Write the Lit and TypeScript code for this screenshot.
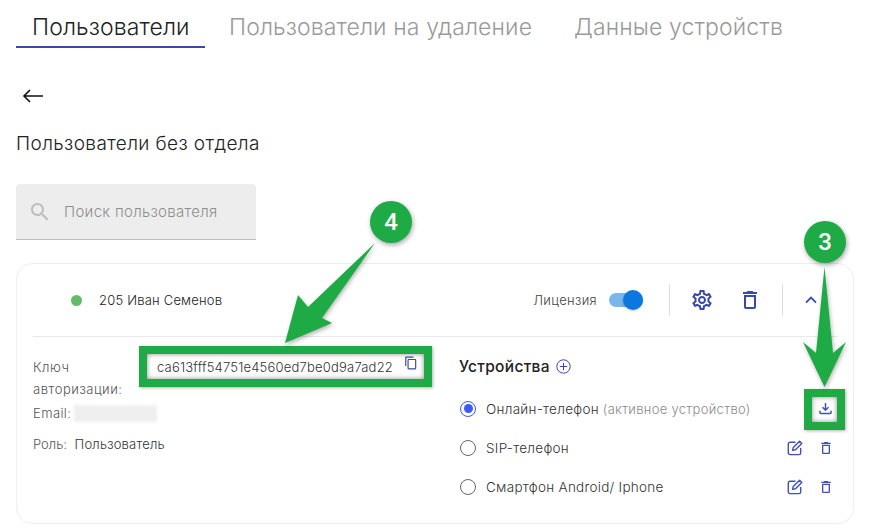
import { LitElement, html, css, svg } from "lit";
import { customElement } from "lit/decorators.js";

const gear = "M19.43 12.98c.04-.32.07-.64.07-.98 0-.34-.03-.66-.07-.98l2.11-1.65c.19-.15.24-.42.12-.64l-2-3.46c-.09-.16-.26-.25-.44-.25-.06 0-.12.01-.17.03l-2.49 1c-.52-.4-1.08-.73-1.69-.98l-.38-2.65C14.46 2.18 14.25 2 14 2h-4c-.25 0-.46.18-.49.42l-.38 2.65c-.61.25-1.17.59-1.69.98l-2.49-1c-.06-.02-.12-.03-.18-.03-.17 0-.34.09-.43.25l-2 3.46c-.13.22-.07.49.12.64l2.11 1.65c-.04.32-.07.65-.07.98 0 .33.03.66.07.98l-2.11 1.65c-.19.15-.24.42-.12.64l2 3.46c.09.16.26.25.44.25.06 0 .12-.01.17-.03l2.49-1c.52.4 1.08.73 1.69.98l.38 2.65c.03.24.24.42.49.42h4c.25 0 .46-.18.49-.42l.38-2.65c.61-.25 1.17-.59 1.69-.98l2.49 1c.06.02.12.03.18.03.17 0 .34-.09.43-.25l2-3.46c.12-.22.07-.49-.12-.64l-2.11-1.65zm-1.98-1.71c.04.31.05.52.05.73 0 .21-.02.43-.05.73l-.14 1.13.89.7 1.08.84-.7 1.21-1.27-.51-1.04-.42-.9.68c-.43.32-.84.56-1.25.73l-1.06.43-.16 1.13-.2 1.35h-1.4l-.19-1.35-.16-1.13-1.06-.43c-.43-.18-.83-.41-1.23-.71l-.91-.7-1.06.43-1.27.51-.7-1.21 1.08-.84.89-.7-.14-1.13c-.03-.31-.05-.54-.05-.74s.02-.43.05-.73l.14-1.13-.89-.7-1.08-.84.7-1.21 1.27.51 1.04.42.9-.68c.43-.32.84-.56 1.25-.73l1.06-.43.16-1.13.2-1.35h1.39l.19 1.35.16 1.13 1.06.43c.43.18.83.41 1.23.71l.91.7 1.06-.43 1.27-.51.7 1.21-1.07.85-.89.7.14 1.13zM12 8c-2.21 0-4 1.79-4 4s1.79 4 4 4 4-1.79 4-4-1.79-4-4-4zm0 6c-1.1 0-2-.9-2-2s.9-2 2-2 2 .9 2 2-.9 2-2 2z";
const trash = "M16 9v10H8V9h8m-1.5-6h-5l-1 1H5v2h14V4h-3.5l-1-1zM18 7H6v12c0 1.1.9 2 2 2h8c1.1 0 2-.9 2-2V7z";
const copy = "M16 1H4c-1.1 0-2 .9-2 2v14h2V3h12V1zm3 4H8c-1.1 0-2 .9-2 2v14c0 1.1.9 2 2 2h11c1.1 0 2-.9 2-2V7c0-1.1-.9-2-2-2zm0 16H8V7h11v14z";
const search = "M15.5 14h-.79l-.28-.27C15.41 12.59 16 11.11 16 9.5 16 5.91 13.09 3 9.5 3S3 5.91 3 9.5 5.91 16 9.5 16c1.61 0 3.09-.59 4.23-1.57l.27.28v.79l5 4.99L20.49 19l-4.99-5zm-6 0C7.01 14 5 11.99 5 9.5S7.01 5 9.5 5 14 7.01 14 9.5 11.99 14 9.5 14z";

const fill = (d: string, size: number) =>
  html`<svg class="ic" width=${size} height=${size} viewBox="0 0 24 24" fill="currentColor"><path d=${d}></path></svg>`;

const edit = html`<svg class="ic" width="16" height="16" viewBox="0 0 16 16" fill="none" stroke="currentColor" stroke-width="1.4" stroke-linecap="round" stroke-linejoin="round"><path d="M8 2.2H3a1.7 1.7 0 0 0-1.7 1.7v9a1.7 1.7 0 0 0 1.7 1.7h9a1.7 1.7 0 0 0 1.7-1.7V8.4"></path><path d="M12.6 1.2 14.8 3.4 8.4 9.8 5.6 10.4 6.2 7.6Z"></path></svg>`;
const download = html`<svg class="ic" width="13" height="13" viewBox="0 0 14 14" fill="none" stroke="currentColor" stroke-width="1.6"><path d="M7 1v7.5M3.8 5.6 7 8.8l3.2-3.2"></path><path d="M1 9.5v1.7a1.3 1.3 0 0 0 1.3 1.3h9.4a1.3 1.3 0 0 0 1.3-1.3V9.5"></path></svg>`;
const plus = html`<svg class="ic" width="15" height="15" viewBox="0 0 15 15" fill="none" stroke="currentColor" stroke-width="1"><circle cx="7.5" cy="7.5" r="6.7"></circle><path d="M7.5 3.8v7.4M3.8 7.5h7.4"></path></svg>`;
const chevron = html`<svg class="ic" width="12" height="8" viewBox="0 0 12 8" fill="none" stroke="currentColor" stroke-width="1.8"><path d="M1 6.6 6 1.6l5 5"></path></svg>`;
const back = html`<svg class="ic" width="22" height="14" viewBox="0 0 22 14" fill="none" stroke="#111" stroke-width="1.6"><path d="M21 7H2M8 1 2 7l6 6"></path></svg>`;

@customElement("app-root")
export class AppRoot extends LitElement {
  static styles = css`
    :host {
      display: block;
      width: 870px;
      height: 530px;
      position: relative;
      overflow: hidden;
      background: #fff;
      font-family: Inter, "Noto Sans", sans-serif;
      color: #333;
    }
    .ic { display: block; flex: none; }
    .page { display: flex; flex-direction: column; padding-left: 16px; padding-right: 16px; }
    .tabs { display: flex; height: 48px; gap: 24px; }
    .tab {
      padding: 13px 16px 0;
      font-size: 23px;
      letter-spacing: 0.12px;
      line-height: 28px;
      font-weight: 300;
      color: #9a9a9a;
      box-sizing: border-box;
      white-space: nowrap;
    }
    .tab.first { width: 189px; color: #222; border-bottom: 2px solid #3949ab; }
    .tab.other { padding: 13px 0 0; }
    .tab.third { margin-left: 18px; }
    .back { padding: 41px 0 0 6px; height: 14px; }
    .title { margin-top: 29px; font-size: 19px; letter-spacing: 0.4px; line-height: 24px; font-weight: 300; color: #222; }
    .search {
      margin-top: 28px;
      width: 240px;
      height: 56px;
      box-sizing: border-box;
      background: #ededed;
      border-bottom: 1px solid #bdbdbd;
      border-radius: 4px 4px 0 0;
      display: flex;
      align-items: center;
      padding-left: 12px;
      gap: 12px;
      color: #bdbdbd;
      font-size: 15px;
      letter-spacing: 0.3px;
    }
    .search span { color: #8d8d8d; font-weight: 300; }
    .card {
      margin-top: 23px;
      height: 261px;
      box-sizing: border-box;
      border: 1px solid #eeeeee;
      border-radius: 16px;
      padding: 0 15px 0 16px;
      display: flex;
      flex-direction: column;
    }
    .head {
      height: 72px;
      flex: none;
      display: flex;
      align-items: center;
      border-bottom: 1px solid #e8e8e8;
      padding-left: 38px;
    }
    .dot { width: 11px; height: 11px; border-radius: 50%; background: #66bb6a; }
    .name { margin-left: 17px; font-size: 13px; letter-spacing: 0.2px; color: #222; font-weight: 300; flex: 1; }
    .lic { font-size: 13px; letter-spacing: 0.35px; font-weight: 300; color: #444; }
    .toggle { position: relative; margin-left: 12px; width: 34px; height: 14px; border-radius: 7px; background: #7ab5ec; }
    .toggle i { position: absolute; right: 0; top: -3px; width: 20px; height: 20px; border-radius: 50%; background: #0b78e0; box-shadow: 0 1px 3px rgba(0,0,0,.2); }
    .vline { width: 1px; height: 32px; background: #dcdcdc; }
    .v1 { margin-left: 26px; }
    .v2 { margin-left: 20px; }
    .acts { display: flex; align-items: center; color: #3949ab; }
    .a1 { margin-left: 20px; }
    .a2 { margin-left: 24px; }
    .a3 { margin-left: 22px; }
    .endgap { width: 21px; }
    .body { display: grid; grid-template-columns: 426px 1fr; flex: 1; }
    .left { font-size: 13px; font-weight: 300; color: #555; padding-top: 19px; }
    .keyrow { display: flex; }
    .keylab { width: 124px; line-height: 22px; letter-spacing: 0.55px; }
    .key { display: flex; gap: 11px; letter-spacing: 0.2px; color: #333; line-height: 22px; }
    .key .ic { color: #3949ab; }
    .email { display: flex; align-items: center; margin-top: 4px; height: 18px; gap: 3px; letter-spacing: 0.4px; }
    .blur { width: 83px; height: 17px; background: #efefef; filter: blur(1.5px); }
    .role { margin-top: 12px; line-height: 20px; }
    .role b { font-weight: 300; color: #333; margin-left: 4px; letter-spacing: 0.2px; }
    .right { display: flex; flex-direction: column; }
    .devh { display: flex; align-items: center; gap: 6px; margin-top: 18px; height: 22px; font-size: 15.5px; letter-spacing: 0.3px; font-weight: 500; color: #222; }
    .devh .ic { color: #3949ab; }
    .dev { display: flex; align-items: center; height: 39px; font-size: 13.5px; letter-spacing: 0.28px; font-weight: 300; color: #333; white-space: pre; }
    .dev.first { margin-top: 12px; }
    .radio { width: 14px; height: 14px; border: 1.5px solid #666; border-radius: 50%; margin: 0 10px 0 1px; flex: none; position: relative; }
    .radio.on { border-color: #3d5afe; }
    .radio.on::after { content: ""; position: absolute; inset: 2.5px; border-radius: 50%; background: #3d5afe; }
    .muted { color: #8a8a8a; margin-left: 4px; font-size: 13px; letter-spacing: 0.3px; }
    .grow { flex: 1; }
    .btns { display: flex; align-items: center; color: #3f51b5; gap: 15px; padding-right: 4px; }
    .btns.dl { padding-right: 6.5px; }
    .over { position: absolute; left: 0; top: 0; pointer-events: none; filter: drop-shadow(1px 2px 2px rgba(0,0,0,.3)); }
    .badge {
      position: absolute; width: 42px; height: 42px; border-radius: 50%;
      background: #1eaa45; color: #fff; font: 500 24px/42px Roboto, sans-serif; text-align: center;
      box-shadow: 1px 2px 5px rgba(0,0,0,.35);
    }
    .b4 { left: 370px; top: 201px; }
    .b3 { left: 804px; top: 221px; }
    .frame {
      position: absolute; box-sizing: border-box; border: 8px solid #1eaa45;
      box-shadow: 1px 1px 3px rgba(0,0,0,.3), inset 0 0 5px rgba(0,0,0,.45);
    }
    .f4 { left: 139px; top: 346px; width: 293px; height: 41px; }
    .f3 { left: 804px; top: 389px; width: 41px; height: 41px; }
  `;

  render() {
    return html`
      <div class="page">
        <div class="tabs">
          <div class="tab first">Пользователи</div>
          <div class="tab other">Пользователи на удаление</div>
          <div class="tab other third">Данные устройств</div>
        </div>
        <div class="back">${back}</div>
        <div class="title">Пользователи без отдела</div>
        <div class="search">${fill(search, 24)}<span>Поиск пользователя</span></div>
        <div class="card">
          <div class="head">
            <div class="dot"></div>
            <div class="name">205 Иван Семенов</div>
            <div class="lic">Лицензия</div>
            <div class="toggle"><i></i></div>
            <div class="vline v1"></div>
            <div class="acts a1">${fill(gear, 24)}</div>
            <div class="acts a2">${fill(trash, 24)}</div>
            <div class="vline v2"></div>
            <div class="acts a3">${chevron}</div>
            <div class="endgap"></div>
          </div>
          <div class="body">
            <div class="left">
              <div class="keyrow">
                <div class="keylab">Ключ<br />авторизации:</div>
                <div class="key">ca613fff54751e4560ed7be0d9a7ad22 ${fill(copy, 14)}</div>
              </div>
              <div class="email">Email: <div class="blur"></div></div>
              <div class="role">Роль: <b>Пользователь</b></div>
            </div>
            <div class="right">
              <div class="devh">Устройства ${plus}</div>
              <div class="dev first"><span class="radio on"></span>Онлайн-телефон<span class="muted">(активное устройство)</span><span class="grow"></span><div class="btns dl">${download}</div></div>
              <div class="dev"><span class="radio"></span>SIP-телефон<span class="grow"></span><div class="btns">${edit}${fill(trash, 16)}</div></div>
              <div class="dev"><span class="radio"></span>Смартфон Android/ Iphone<span class="grow"></span><div class="btns">${edit}${fill(trash, 16)}</div></div>
            </div>
          </div>
        </div>
      </div>
      <div class="frame f4"></div>
      <div class="frame f3"></div>
      <svg class="over" width="870" height="530">
        ${svg`<polygon fill="#1eaa45" points="375,243 322,318 332,323 285,343 298,295 308,307"></polygon>
        <polygon fill="#1eaa45" points="824.5,267 833,353 846,342 824.5,387 803,342 816,353"></polygon>`}
      </svg>
      <div class="badge b4">4</div>
      <div class="badge b3">3</div>
    `;
  }
}
